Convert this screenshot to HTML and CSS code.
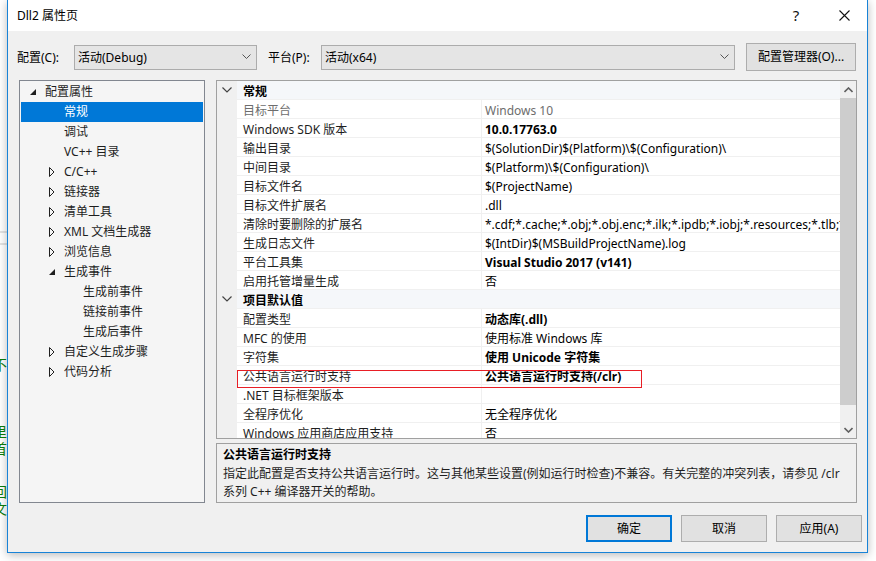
FILE: index.html
```html
<!DOCTYPE html>
<html lang="zh-cn">
<head>
    <meta charset="UTF-8">
    <title>Dll2 属性页</title>
    <link rel="stylesheet" href="styles.css">
</head>
<body>
    <div class="desk">
        <!-- janela de fundo, só aparece a borda -->
        <div class="behind">
            <div class="behind-rule"></div>
            <div class="behind-rule second"></div>
            <div class="behind-text first">不</div>
            <div class="behind-text gap">里</div>
            <div class="behind-text">首</div>
            <div class="behind-text gap-small">回</div>
            <div class="behind-text">文</div>
        </div>

        <div class="dialog">
            <div class="titlebar">
                <span class="title">Dll2 属性页</span>
                <span class="cap-btn help">?</span>
                <span class="cap-btn">
                    <svg width="11" height="11" viewBox="0 0 11 11"><path d="M0.5 0.5 L10.5 10.5 M10.5 0.5 L0.5 10.5" stroke="#111" stroke-width="1.1"/></svg>
                </span>
            </div>

            <div class="dlg-body">
                <div class="toolbar">
                    <span class="tb-label cfg">配置(C):</span>
                    <div class="combo combo-config">
                        <span>活动(Debug)</span>
                        <svg width="9" height="5" viewBox="0 0 9 5"><path d="M0.5 0.5 L4.5 4.5 L8.5 0.5" fill="none" stroke="#555"/></svg>
                    </div>
                    <span class="tb-label plat">平台(P):</span>
                    <div class="combo combo-platform">
                        <span>活动(x64)</span>
                        <svg width="9" height="5" viewBox="0 0 9 5"><path d="M0.5 0.5 L4.5 4.5 L8.5 0.5" fill="none" stroke="#555"/></svg>
                    </div>
                    <button class="btn btn-manager">配置管理器(O)...</button>
                </div>

                <div class="main">
                    <!-- árvore de categorias -->
                    <div class="tree">
                        <div class="node lvl1"><span class="twisty"><svg width="7" height="7" viewBox="0 0 7 7"><path d="M6 0 L6 6 L0 6 Z" fill="#1e1e1e"/></svg></span>配置属性</div>
                        <div class="node lvl2 selected"><span class="twisty"></span>常规</div>
                        <div class="node lvl2"><span class="twisty"></span>调试</div>
                        <div class="node lvl2"><span class="twisty"></span>VC++ 目录</div>
                        <div class="node lvl2"><span class="twisty"><svg width="6" height="10" viewBox="0 0 6 10"><path d="M0.5 0.5 L5 5 L0.5 9.5 Z" fill="none" stroke="#1e1e1e"/></svg></span>C/C++</div>
                        <div class="node lvl2"><span class="twisty"><svg width="6" height="10" viewBox="0 0 6 10"><path d="M0.5 0.5 L5 5 L0.5 9.5 Z" fill="none" stroke="#1e1e1e"/></svg></span>链接器</div>
                        <div class="node lvl2"><span class="twisty"><svg width="6" height="10" viewBox="0 0 6 10"><path d="M0.5 0.5 L5 5 L0.5 9.5 Z" fill="none" stroke="#1e1e1e"/></svg></span>清单工具</div>
                        <div class="node lvl2"><span class="twisty"><svg width="6" height="10" viewBox="0 0 6 10"><path d="M0.5 0.5 L5 5 L0.5 9.5 Z" fill="none" stroke="#1e1e1e"/></svg></span>XML 文档生成器</div>
                        <div class="node lvl2"><span class="twisty"><svg width="6" height="10" viewBox="0 0 6 10"><path d="M0.5 0.5 L5 5 L0.5 9.5 Z" fill="none" stroke="#1e1e1e"/></svg></span>浏览信息</div>
                        <div class="node lvl2"><span class="twisty"><svg width="7" height="7" viewBox="0 0 7 7"><path d="M6 0 L6 6 L0 6 Z" fill="#1e1e1e"/></svg></span>生成事件</div>
                        <div class="node lvl3"><span class="twisty"></span>生成前事件</div>
                        <div class="node lvl3"><span class="twisty"></span>链接前事件</div>
                        <div class="node lvl3"><span class="twisty"></span>生成后事件</div>
                        <div class="node lvl2"><span class="twisty"><svg width="6" height="10" viewBox="0 0 6 10"><path d="M0.5 0.5 L5 5 L0.5 9.5 Z" fill="none" stroke="#1e1e1e"/></svg></span>自定义生成步骤</div>
                        <div class="node lvl2"><span class="twisty"><svg width="6" height="10" viewBox="0 0 6 10"><path d="M0.5 0.5 L5 5 L0.5 9.5 Z" fill="none" stroke="#1e1e1e"/></svg></span>代码分析</div>
                    </div>

                    <div class="right">
                        <!-- grade de propriedades -->
                        <div class="grid">
                            <div class="grid-rows">
                                <div class="cat"><span class="gutter"><svg width="10" height="6" viewBox="0 0 10 6"><path d="M0.5 0.5 L5 5 L9.5 0.5" fill="none" stroke="#444" stroke-width="1.2"/></svg></span><span class="cname">常规</span></div>
                                <div class="prop disabled"><span class="gutter"></span><span class="pname">目标平台</span><span class="pval">Windows 10</span></div>
                                <div class="prop"><span class="gutter"></span><span class="pname">Windows SDK 版本</span><span class="pval strong">10.0.17763.0</span></div>
                                <div class="prop"><span class="gutter"></span><span class="pname">输出目录</span><span class="pval">$(SolutionDir)$(Platform)\$(Configuration)\</span></div>
                                <div class="prop"><span class="gutter"></span><span class="pname">中间目录</span><span class="pval">$(Platform)\$(Configuration)\</span></div>
                                <div class="prop"><span class="gutter"></span><span class="pname">目标文件名</span><span class="pval">$(ProjectName)</span></div>
                                <div class="prop"><span class="gutter"></span><span class="pname">目标文件扩展名</span><span class="pval">.dll</span></div>
                                <div class="prop"><span class="gutter"></span><span class="pname">清除时要删除的扩展名</span><span class="pval">*.cdf;*.cache;*.obj;*.obj.enc;*.ilk;*.ipdb;*.iobj;*.resources;*.tlb;*.tli;*.tlh;*.tmp</span></div>
                                <div class="prop"><span class="gutter"></span><span class="pname">生成日志文件</span><span class="pval">$(IntDir)$(MSBuildProjectName).log</span></div>
                                <div class="prop"><span class="gutter"></span><span class="pname">平台工具集</span><span class="pval strong">Visual Studio 2017 (v141)</span></div>
                                <div class="prop"><span class="gutter"></span><span class="pname">启用托管增量生成</span><span class="pval">否</span></div>
                                <div class="cat"><span class="gutter"><svg width="10" height="6" viewBox="0 0 10 6"><path d="M0.5 0.5 L5 5 L9.5 0.5" fill="none" stroke="#444" stroke-width="1.2"/></svg></span><span class="cname">项目默认值</span></div>
                                <div class="prop"><span class="gutter"></span><span class="pname">配置类型</span><span class="pval strong">动态库(.dll)</span></div>
                                <div class="prop"><span class="gutter"></span><span class="pname">MFC 的使用</span><span class="pval">使用标准 Windows 库</span></div>
                                <div class="prop"><span class="gutter"></span><span class="pname">字符集</span><span class="pval strong">使用 Unicode 字符集</span></div>
                                <div class="prop"><span class="gutter"></span><span class="pname">公共语言运行时支持</span><span class="pval strong">公共语言运行时支持(/clr)</span></div>
                                <div class="prop"><span class="gutter"></span><span class="pname">.NET 目标框架版本</span><span class="pval"></span></div>
                                <div class="prop"><span class="gutter"></span><span class="pname">全程序优化</span><span class="pval">无全程序优化</span></div>
                                <div class="prop"><span class="gutter"></span><span class="pname">Windows 应用商店应用支持</span><span class="pval">否</span></div>

                                <!-- marcação vermelha por cima da linha -->
                                <div class="highlight-box"></div>
                            </div>
                            <div class="scrollbar">
                                <div class="sb-arrow">
                                    <svg width="9" height="6" viewBox="0 0 9 6"><path d="M0.5 5 L4.5 1 L8.5 5" fill="none" stroke="#606060" stroke-width="1.6"/></svg>
                                </div>
                                <div class="sb-thumb"></div>
                                <div class="sb-track"></div>
                                <div class="sb-arrow">
                                    <svg width="9" height="6" viewBox="0 0 9 6"><path d="M0.5 1 L4.5 5 L8.5 1" fill="none" stroke="#606060" stroke-width="1.6"/></svg>
                                </div>
                            </div>
                        </div>

                        <!-- descrição da propriedade -->
                        <div class="desc">
                            <div class="desc-title">公共语言运行时支持</div>
                            <div class="desc-text">指定此配置是否支持公共语言运行时。这与其他某些设置(例如运行时检查)不兼容。有关完整的冲突列表，请参见 /clr<br>系列 C++ 编译器开关的帮助。</div>
                        </div>
                    </div>
                </div>

                <div class="actions">
                    <button class="btn btn-action default">确定</button>
                    <button class="btn btn-action">取消</button>
                    <button class="btn btn-action">应用(A)</button>
                </div>
            </div>
        </div>
    </div>
</body>
</html>
```

FILE: styles.css
```css
/* Estilos gerais */
* {
    box-sizing: border-box;
}

body {
    margin: 0;
    width: 876px;
    height: 561px;
    overflow: hidden;
    background: #fff;
    font-family: "Noto Sans", "Noto Sans CJK SC", sans-serif;
    font-size: 12px;
    color: #1e1e1e;
}

.desk {
    display: flex;
    height: 561px;
}

/* Janela de trás */
.behind {
    width: 7px;
    height: 561px;
    overflow: hidden;
    padding-top: 231px;
}

.behind-rule {
    height: 2px;
    width: 7px;
    background: #e3e3e3;
}

.behind-rule.second {
    margin-top: 10px;
}

.behind-text {
    margin-left: -7px;
    font-size: 14px;
    line-height: 17px;
    height: 17px;
    color: #0a7d0a;
    white-space: nowrap;
}

.behind-text.first {
    margin-top: 111px;
}

.behind-text.gap {
    margin-top: 50px;
}

.behind-text.gap-small {
    margin-top: 26px;
}

/* Diálogo */
.dialog {
    width: 861px;
    height: 553px;
    border: 1px solid #1883d7;
    border-top: none;
    background: #f0f0f0;
    box-shadow: 0 2px 9px rgba(0, 0, 0, 0.28);
    display: flex;
    flex-direction: column;
}

.titlebar {
    height: 31px;
    flex-shrink: 0;
    background: #fff;
    display: flex;
    align-items: center;
    padding-left: 9px;
    padding-bottom: 1px;
}

.title {
    flex: 1;
    color: #000;
}

.cap-btn {
    width: 46px;
    height: 30px;
    display: flex;
    align-items: center;
    justify-content: center;
}

.help {
    font-size: 15px;
    color: #111;
    padding-right: 4px;
}

.dlg-body {
    flex: 1;
    padding-top: 12px;
}

/* Barra superior */
.toolbar {
    display: flex;
    align-items: center;
    height: 28px;
    padding-left: 9px;
}

.tb-label {
    color: #000;
    padding-bottom: 1px;
}

.tb-label.cfg {
    width: 57px;
}

.tb-label.plat {
    width: 53px;
    margin-left: 11px;
}

.combo {
    height: 25px;
    background: #e5e5e5;
    border: 1px solid #acacac;
    display: flex;
    align-items: center;
    justify-content: space-between;
    padding: 0 5px 1px 3px;
    color: #000;
}

.combo-config {
    width: 183px;
}

.combo-platform {
    width: 414px;
}

.btn {
    font-family: inherit;
    font-size: 12px;
    color: #000;
    background: #e1e1e1;
    border: 1px solid #adadad;
    padding: 0;
}

.btn-manager {
    width: 110px;
    height: 28px;
    margin-left: 11px;
    padding-bottom: 2px;
}

/* Área principal */
.main {
    display: flex;
    gap: 11px;
    margin-top: 9px;
    padding-left: 11px;
    height: 423px;
}

.tree {
    width: 186px;
    border: 1px solid #828790;
    background: #f5f5f5;
    padding: 1px;
}

.node {
    height: 20px;
    line-height: 20px;
    display: flex;
    align-items: center;
    white-space: nowrap;
    color: #1e1e1e;
}

.node.lvl1 {
    padding-left: 9px;
}

.node.lvl2 {
    padding-left: 28px;
}

.node.lvl3 {
    padding-left: 47px;
}

.node.selected {
    background: #0078d7;
    color: #fff;
}

.twisty {
    width: 15px;
    display: flex;
    align-items: center;
}

.right {
    width: 641px;
    display: flex;
    flex-direction: column;
}

.grid {
    height: 359px;
    border: 1px solid #a0a0a0;
    display: flex;
    background: #fff;
}

.grid-rows {
    position: relative;
    width: 623px;
    overflow: hidden;
}

.prop,
.cat {
    display: flex;
    height: 19px;
    line-height: 15px;
    border-bottom: 1px solid #f0f0f0;
}

.cat {
    background: #f5f7fa;
    font-weight: bold;
    color: #000;
}

.gutter {
    width: 20px;
    flex-shrink: 0;
    background: #f0f0f0;
    display: flex;
    align-items: center;
    justify-content: center;
}

.cname {
    padding: 3px 0 0 6px;
}

.pname {
    width: 244px;
    flex-shrink: 0;
    padding: 3px 0 0 6px;
    white-space: nowrap;
}

.pval {
    flex: 1;
    border-left: 1px solid #f0f0f0;
    padding: 3px 0 0 3px;
    white-space: nowrap;
    overflow: hidden;
    color: #000;
}

.pval.strong {
    font-weight: bold;
}

.prop.disabled .pname,
.prop.disabled .pval {
    color: #6d6d6d;
}

.highlight-box {
    position: absolute;
    left: 20px;
    top: 289px;
    width: 405px;
    height: 18px;
    border: 1px solid #e81e25;
}

.scrollbar {
    width: 16px;
    background: #f0f0f0;
    display: flex;
    flex-direction: column;
}

.sb-arrow {
    height: 17px;
    display: flex;
    align-items: center;
    justify-content: center;
}

.sb-thumb {
    height: 307px;
    background: #cdcdcd;
}

.sb-track {
    flex: 1;
}

.desc {
    margin-top: 4px;
    height: 60px;
    border: 1px solid #a0a0a0;
    background: #f0f0f0;
    padding: 2px 6px 0;
    line-height: 18px;
    color: #1e1e1e;
}

.desc-title {
    font-weight: bold;
    color: #000;
    height: 19px;
}

/* Botões de ação */
.actions {
    display: flex;
    justify-content: flex-end;
    gap: 9px;
    margin-top: 12px;
    padding-right: 5px;
}

.btn-action {
    width: 86px;
    height: 27px;
    padding-bottom: 1px;
}

.btn-action.default {
    border: 2px solid #0078d7;
}
```
